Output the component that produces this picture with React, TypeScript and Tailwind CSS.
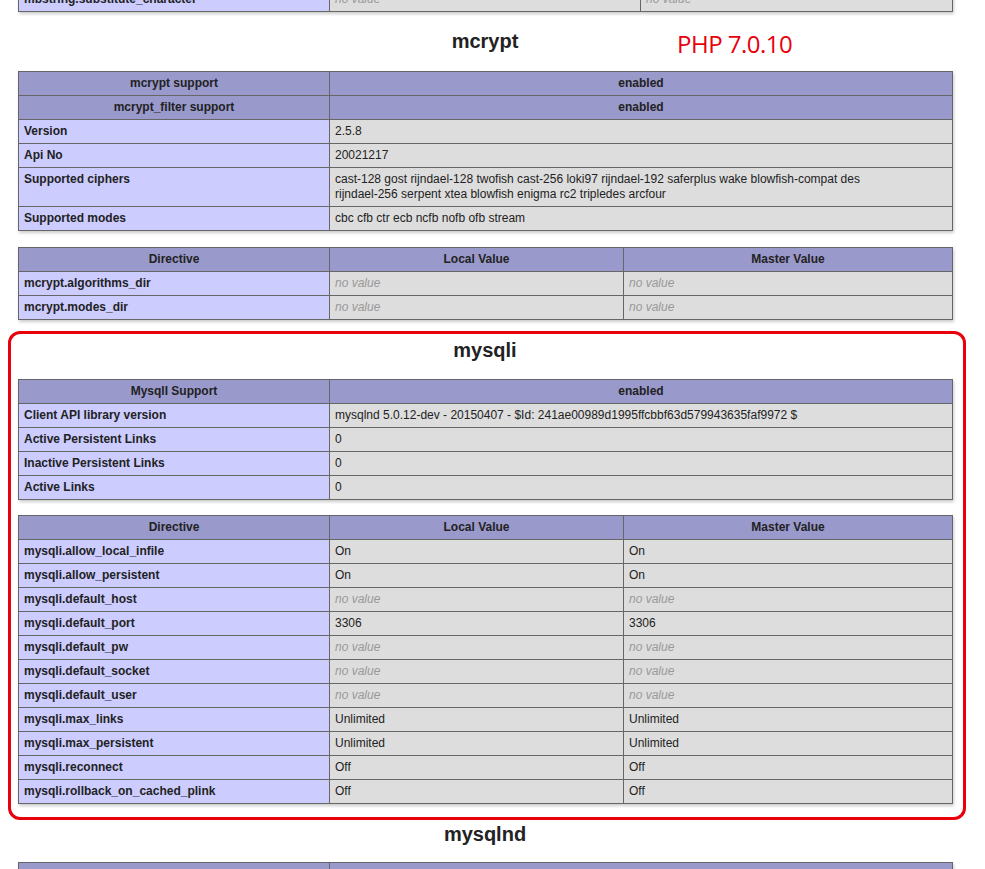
import React from "react"

type Cell = { text: React.ReactNode; kind: "e" | "v" | "h" | "nv"; span?: number }
type Row = Cell[]

const font = { fontFamily: '"Liberation Sans", Arial, sans-serif' }

const NoValue: Cell = { text: "no value", kind: "nv" }

const cellClass = (kind: Cell["kind"]) => {
  if (kind === "h") return "bg-[#9999cc] font-bold text-center"
  if (kind === "e") return "bg-[#ccccff] font-bold text-left"
  if (kind === "nv") return "bg-[#dddddd] italic text-[#999999] text-left"
  return "bg-[#dddddd] text-left"
}

const InfoTable = ({ cols, rows, className = "" }: { cols: string[]; rows: Row[]; className?: string }) => (
  <table className={`w-[934px] table-fixed border-collapse shadow-[1px_2px_3px_#cccccc] ${className}`}>
    <colgroup>
      {cols.map((c, i) => (
        <col key={i} className={c} />
      ))}
    </colgroup>
    <tbody>
      {rows.map((row, ri) => (
        <tr key={ri}>
          {row.map((cell, ci) => (
            <td
              key={ci}
              colSpan={cell.span}
              className={`border border-[#666666] px-[5px] py-[4px] text-[12px] leading-[15px] align-baseline text-[#222222] ${cellClass(cell.kind)}`}
            >
              {cell.text}
            </td>
          ))}
        </tr>
      ))}
    </tbody>
  </table>
)

const Heading = ({ children }: { children: React.ReactNode }) => (
  <h2 className="w-[934px] text-center text-[20px] leading-[23px] font-bold text-[#222222]">{children}</h2>
)

const two = ["w-[311px]", "w-[623px]"]
const three = ["w-[311px]", "w-[294px]", "w-[329px]"]

const dirHeader: Row = [
  { text: "Directive", kind: "h" },
  { text: "Local Value", kind: "h" },
  { text: "Master Value", kind: "h" },
]

const mysqliDirectives: [string, string | null][] = [
  ["mysqli.allow_local_infile", "On"],
  ["mysqli.allow_persistent", "On"],
  ["mysqli.default_host", null],
  ["mysqli.default_port", "3306"],
  ["mysqli.default_pw", null],
  ["mysqli.default_socket", null],
  ["mysqli.default_user", null],
  ["mysqli.max_links", "Unlimited"],
  ["mysqli.max_persistent", "Unlimited"],
  ["mysqli.reconnect", "Off"],
  ["mysqli.rollback_on_cached_plink", "Off"],
]

const dirRow = (name: string, val: string | null): Row => [
  { text: name, kind: "e" },
  val ? { text: val, kind: "v" } : NoValue,
  val ? { text: val, kind: "v" } : NoValue,
]

export default function App() {
  return (
    <div className="relative h-[869px] w-[985px] overflow-hidden bg-white" style={font}>
      <div className="-mt-[13px] flex flex-col pl-[18px]">
        <InfoTable
          cols={["w-[311px]", "w-[311px]", "w-[312px]"]}
          rows={[[{ text: "mbstring.substitute_character", kind: "e" }, NoValue, NoValue]]}
        />

        <div className="mt-[18px]">
          <Heading>mcrypt</Heading>
        </div>

        <InfoTable
          className="mt-[18px]"
          cols={two}
          rows={[
            [{ text: "mcrypt support", kind: "h" }, { text: "enabled", kind: "h" }],
            [{ text: "mcrypt_filter support", kind: "h" }, { text: "enabled", kind: "h" }],
            [{ text: "Version", kind: "e" }, { text: "2.5.8", kind: "v" }],
            [{ text: "Api No", kind: "e" }, { text: "20021217", kind: "v" }],
            [
              { text: "Supported ciphers", kind: "e" },
              {
                text: (
                  <>
                    cast-128 gost rijndael-128 twofish cast-256 loki97 rijndael-192 saferplus wake blowfish-compat des
                    <br />
                    rijndael-256 serpent xtea blowfish enigma rc2 tripledes arcfour
                  </>
                ),
                kind: "v",
              },
            ],
            [{ text: "Supported modes", kind: "e" }, { text: "cbc cfb ctr ecb ncfb nofb ofb stream", kind: "v" }],
          ]}
        />

        <InfoTable
          className="mt-[16px]"
          cols={three}
          rows={[dirHeader, dirRow("mcrypt.algorithms_dir", null), dirRow("mcrypt.modes_dir", null)]}
        />

        {/* mysqli section, circled in red */}
        <div className="relative flex flex-col pt-[19px]">
          <div className="pointer-events-none absolute left-[-10px] top-[11px] h-[489px] w-[958px] rounded-[12px] border-[3px] border-[#e8000b]" />
          <Heading>mysqli</Heading>
          <InfoTable
            className="mt-[17px]"
            cols={two}
            rows={[
              [{ text: "MysqlI Support", kind: "h" }, { text: "enabled", kind: "h" }],
              [
                { text: "Client API library version", kind: "e" },
                { text: "mysqlnd 5.0.12-dev - 20150407 - $Id: 241ae00989d1995ffcbbf63d579943635faf9972 $", kind: "v" },
              ],
              [{ text: "Active Persistent Links", kind: "e" }, { text: "0", kind: "v" }],
              [{ text: "Inactive Persistent Links", kind: "e" }, { text: "0", kind: "v" }],
              [{ text: "Active Links", kind: "e" }, { text: "0", kind: "v" }],
            ]}
          />
          <InfoTable
            className="mt-[15px]"
            cols={three}
            rows={[dirHeader, ...mysqliDirectives.map(([n, v]) => dirRow(n, v))]}
          />
        </div>

        <div className="mt-[19px]">
          <Heading>mysqlnd</Heading>
        </div>

        <InfoTable
          className="mt-[16px]"
          cols={two}
          rows={[[{ text: "mysqlnd", kind: "h" }, { text: "enabled", kind: "h" }]]}
        />
      </div>

      <div
        className="absolute left-[677px] top-[27px] text-[24px] leading-[33px] tracking-[-0.5px] text-[#e8000b]"
        style={{ fontFamily: '"Open Sans", "Noto Sans", sans-serif' }}
      >
        PHP 7.0.10
      </div>
    </div>
  )
}
